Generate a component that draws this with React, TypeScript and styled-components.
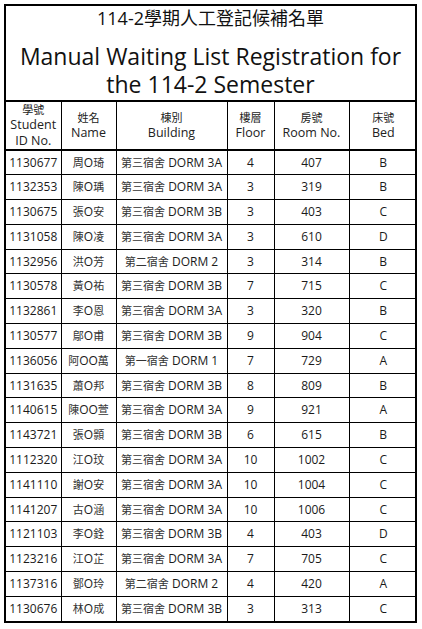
import React from "react";
import styled, { createGlobalStyle } from "styled-components";

const GlobalStyle = createGlobalStyle`
  html, body {
    margin: 0;
    padding: 0;
    background: #ffffff;
  }
  body {
    font-family: "Open Sans", "Noto Sans CJK TC", sans-serif;
    color: #111111;
  }
`;

type Entry = {
  id: string;
  name: string;
  hall: string;
  dorm: string;
  floor: string;
  room: string;
  bed: string;
};

const entries: Entry[] = [
  { id: "1130677", name: "周O琦", hall: "第三宿舍", dorm: "DORM 3A", floor: "4", room: "407", bed: "B" },
  { id: "1132353", name: "陳O瑀", hall: "第三宿舍", dorm: "DORM 3A", floor: "3", room: "319", bed: "B" },
  { id: "1130675", name: "張O安", hall: "第三宿舍", dorm: "DORM 3B", floor: "3", room: "403", bed: "C" },
  { id: "1131058", name: "陳O凌", hall: "第三宿舍", dorm: "DORM 3A", floor: "3", room: "610", bed: "D" },
  { id: "1132956", name: "洪O芳", hall: "第二宿舍", dorm: "DORM 2", floor: "3", room: "314", bed: "B" },
  { id: "1130578", name: "黃O祐", hall: "第三宿舍", dorm: "DORM 3B", floor: "7", room: "715", bed: "C" },
  { id: "1132861", name: "李O恩", hall: "第三宿舍", dorm: "DORM 3A", floor: "3", room: "320", bed: "B" },
  { id: "1130577", name: "鄔O甫", hall: "第三宿舍", dorm: "DORM 3B", floor: "9", room: "904", bed: "C" },
  { id: "1136056", name: "阿OO萬", hall: "第一宿舍", dorm: "DORM 1", floor: "7", room: "729", bed: "A" },
  { id: "1131635", name: "蕭O邦", hall: "第三宿舍", dorm: "DORM 3B", floor: "8", room: "809", bed: "B" },
  { id: "1140615", name: "陳OO萱", hall: "第三宿舍", dorm: "DORM 3A", floor: "9", room: "921", bed: "A" },
  { id: "1143721", name: "張O顥", hall: "第三宿舍", dorm: "DORM 3B", floor: "6", room: "615", bed: "B" },
  { id: "1112320", name: "江O玟", hall: "第三宿舍", dorm: "DORM 3A", floor: "10", room: "1002", bed: "C" },
  { id: "1141110", name: "謝O安", hall: "第三宿舍", dorm: "DORM 3A", floor: "10", room: "1004", bed: "C" },
  { id: "1141207", name: "古O涵", hall: "第三宿舍", dorm: "DORM 3A", floor: "10", room: "1006", bed: "C" },
  { id: "1121103", name: "李O銓", hall: "第三宿舍", dorm: "DORM 3B", floor: "4", room: "403", bed: "D" },
  { id: "1123216", name: "江O芷", hall: "第三宿舍", dorm: "DORM 3A", floor: "7", room: "705", bed: "C" },
  { id: "1137316", name: "鄧O玲", hall: "第二宿舍", dorm: "DORM 2", floor: "4", room: "420", bed: "A" },
  { id: "1130676", name: "林O成", hall: "第三宿舍", dorm: "DORM 3B", floor: "3", room: "313", bed: "C" },
];

const headings = [
  { zh: "學號", en: ["Student", "ID No."], width: 55 },
  { zh: "姓名", en: ["Name"], width: 55 },
  { zh: "棟別", en: ["Building"], width: 111 },
  { zh: "樓層", en: ["Floor"], width: 47 },
  { zh: "房號", en: ["Room No."], width: 75 },
  { zh: "床號", en: ["Bed"], width: 68 },
];

// splits a name so the CJK characters get their smaller size
function splitName(name: string) {
  return name.split(/(O+)/).filter(Boolean);
}

export default function App() {
  return (
    <>
      <GlobalStyle />
      <Sheet>
        <TitleBlock>
          <ZhTitle>114-2學期人工登記候補名單</ZhTitle>
          <EnTitle>
            Manual Waiting List Registration for
            <br />
            the 114-2 Semester
          </EnTitle>
        </TitleBlock>

        <Table>
          <colgroup>
            {headings.map((h) => (
              <col key={h.zh} style={{ width: h.width }} />
            ))}
          </colgroup>
          <thead>
            <HeadRow>
              {headings.map((h) => (
                <HeadCell key={h.zh}>
                  <HeadZh>{h.zh}</HeadZh>
                  {h.en.map((line) => (
                    <HeadEn key={line}>{line}</HeadEn>
                  ))}
                </HeadCell>
              ))}
            </HeadRow>
          </thead>
          <tbody>
            {entries.map((e) => (
              <Row key={e.id}>
                <Cell>{e.id}</Cell>
                <Cell>
                  {splitName(e.name).map((part, i) =>
                    /^O+$/.test(part) ? (
                      <span key={i}>{part}</span>
                    ) : (
                      <Han key={i}>{part}</Han>
                    )
                  )}
                </Cell>
                <Cell>
                  <Han>{e.hall}</Han> {e.dorm}
                </Cell>
                <Cell>{e.floor}</Cell>
                <Cell>{e.room}</Cell>
                <Cell>{e.bed}</Cell>
              </Row>
            ))}
          </tbody>
        </Table>
      </Sheet>
    </>
  );
}

const Sheet = styled.div`
  width: 409px;
  margin: 4px 0 0 4px;
  border: 2px solid #000000;
  background: #ffffff;
`;

const TitleBlock = styled.header`
  height: 94px;
  display: flex;
  flex-direction: column;
  align-items: center;
  border-bottom: 2px solid #000000;
  text-align: center;
  overflow: hidden;
`;

const ZhTitle = styled.div`
  font-size: 18px;
  line-height: 24px;
  color: #111111;
`;

const EnTitle = styled.div`
  margin-top: 12px;
  font-size: 23px;
  line-height: 28px;
  color: #111111;
`;

const Table = styled.table`
  width: 100%;
  table-layout: fixed;
  border-collapse: collapse;
`;

const HeadRow = styled.tr`
  height: 48px;
  border-bottom: 2px solid #000000;
`;

const HeadCell = styled.th`
  padding: 0;
  font-weight: normal;
  text-align: center;
  vertical-align: middle;
  border-left: 1px solid #000000;

  &:first-child {
    border-left: none;
  }
`;

const HeadZh = styled.div`
  font-size: 11px;
  line-height: 15px;
  color: #222222;
`;

const HeadEn = styled.div`
  font-size: 12.5px;
  line-height: 16px;
  color: #222222;
`;

const Row = styled.tr`
  height: 24.8px;
  border-top: 1px solid #000000;

  &:first-child {
    border-top: none;
  }
`;

const Cell = styled.td`
  padding: 0;
  font-size: 12px;
  line-height: 16px;
  text-align: center;
  vertical-align: middle;
  white-space: nowrap;
  border-left: 1px solid #000000;
  color: #1a1a1a;

  &:first-child {
    border-left: none;
  }
`;

const Han = styled.span`
  font-size: 11px;
  color: #333333;
`;
